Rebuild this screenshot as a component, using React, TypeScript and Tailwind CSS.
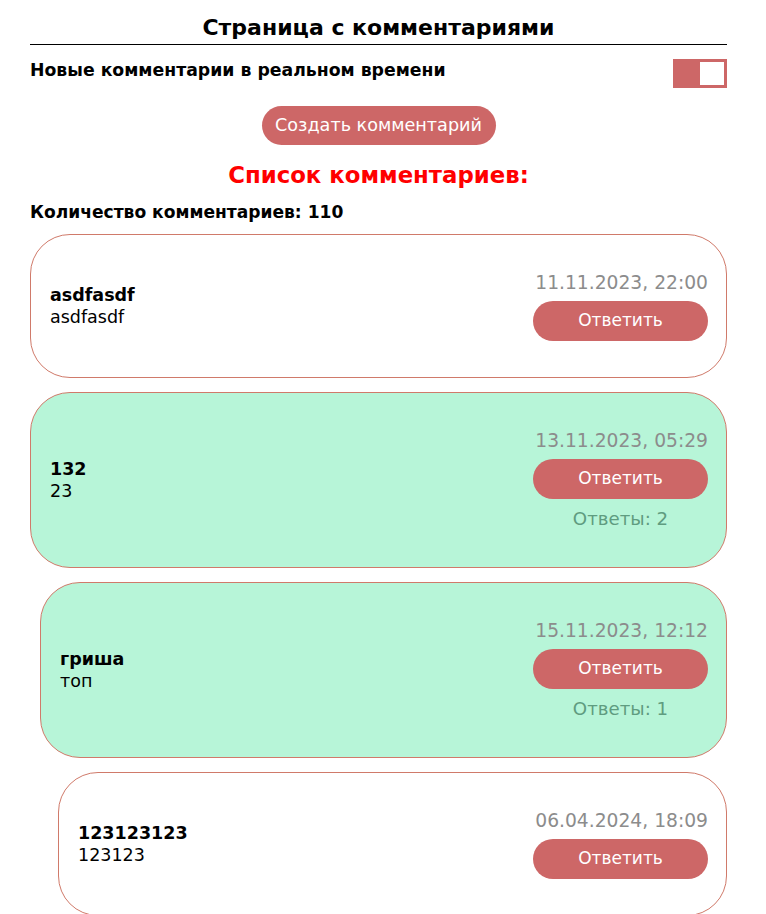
import React from 'react';

type Comment = {
  name: string;
  text: string;
  date: string;
  replies?: number;
  indent: string;
  green?: boolean;
};

const comments: Comment[] = [
  { name: 'asdfasdf', text: 'asdfasdf', date: '11.11.2023, 22:00', indent: 'ml-0' },
  { name: '132', text: '23', date: '13.11.2023, 05:29', replies: 2, indent: 'ml-0', green: true },
  { name: 'гриша', text: 'топ', date: '15.11.2023, 12:12', replies: 1, indent: 'ml-[10px]', green: true },
  { name: '123123123', text: '123123', date: '06.04.2024, 18:09', indent: 'ml-[28px]' },
];

const CommentCard = ({ c }: { c: Comment }) => (
  <div
    className={`${c.indent} flex items-center justify-between rounded-[40px] border border-[#d07a6a] pl-[19px] pr-[18px] py-[36px] ${
      c.green ? 'bg-[#b7f5d8]' : 'bg-white'
    }`}
  >
    <div className="flex flex-col">
      <span className="font-bold text-[17.5px] leading-[22px] text-black">{c.name}</span>
      <span className="text-[17.5px] leading-[22px] text-black">{c.text}</span>
    </div>
    <div className="flex flex-col items-center">
      <span className="text-[18.7px] leading-[24px] text-[#8c8c8c] self-end">{c.date}</span>
      <button className="mt-[6px] w-[175px] h-[40px] rounded-[20px] bg-[#cd6767] text-white text-[17px]">
        Ответить
      </button>
      {c.replies !== undefined && (
        <span className="mt-[8px] text-[18.2px] leading-[24px] text-[#5f9c80]">Ответы: {c.replies}</span>
      )}
    </div>
  </div>
);

export default function App() {
  return (
    <div className="w-[766px] min-h-[914px] bg-white font-['DejaVu_Sans',sans-serif] text-black">
      <div className="mx-[30px] w-[697px]">
        <h1 className="pt-[14px] pb-[2px] text-center text-[22px] font-bold leading-[28px] border-b border-black">
          Страница с комментариями
        </h1>
        <div className="mt-[14px] flex items-start justify-between">
          <span className="text-[17.3px] font-bold leading-[22px]">Новые комментарии в реальном времени</span>
          <div className="flex h-[29px] w-[54px] items-center justify-end bg-[#cd6767] pr-[3px]">
            <div className="h-[23px] w-[24px] bg-white" />
          </div>
        </div>
        <div className="mt-[18px] flex justify-center">
          <button className="h-[39px] w-[234px] rounded-full bg-[#cd6767] text-[17.6px] text-white">
            Создать комментарий
          </button>
        </div>
        <h2 className="mt-[15px] text-center text-[22.8px] font-bold leading-[30px] text-[#ff0000]">
          Список комментариев:
        </h2>
        <div className="mt-[11px] text-[17.1px] font-bold leading-[22px]">Количество комментариев: 110</div>
        <div className="mt-[11px] flex flex-col gap-[14px]">
          {comments.map((c, i) => (
            <CommentCard key={i} c={c} />
          ))}
        </div>
      </div>
    </div>
  );
}
